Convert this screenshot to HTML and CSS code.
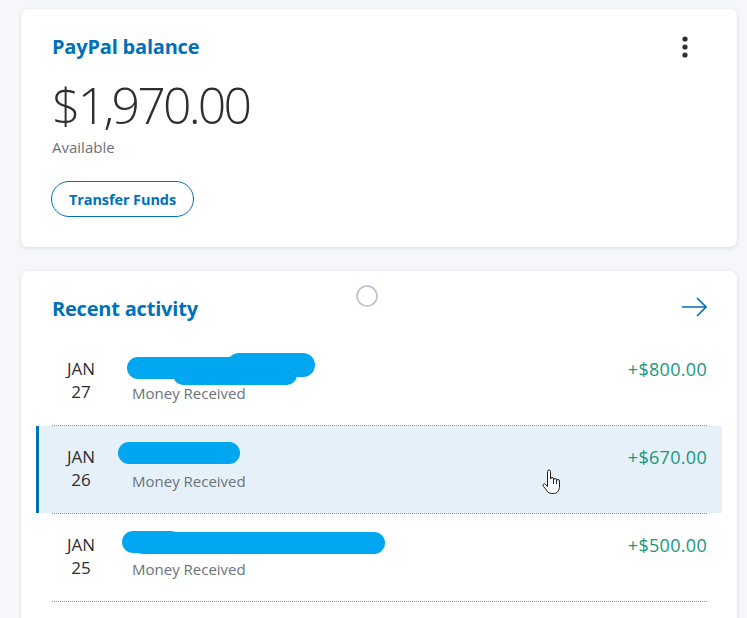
FILE: index.html
```html
<!DOCTYPE html>
<html lang="en">
<head>
  <meta charset="UTF-8" />
  <meta name="viewport" content="width=device-width, initial-scale=1.0" />
  <title>PayPal Summary</title>
  <link rel="stylesheet" href="styles.css">
</head>
<body>
  <section class="card balance-card">
    <div class="card-head">
      <h2 class="card-title">PayPal balance</h2>
      <button class="kebab" aria-label="More options">
        <svg width="6" height="22" viewBox="0 0 6 22">
          <circle cx="3" cy="3" r="2.6" fill="#2c2e2f"/>
          <circle cx="3" cy="11" r="2.6" fill="#2c2e2f"/>
          <circle cx="3" cy="19" r="2.6" fill="#2c2e2f"/>
        </svg>
      </button>
    </div>
    <div class="balance-amount">$1,970.00</div>
    <div class="balance-label">Available</div>
    <button class="btn-outline">Transfer Funds</button>
  </section>

  <section class="card activity-card">
    <svg class="spinner" width="24" height="24" viewBox="0 0 24 24">
      <circle cx="12" cy="12" r="10" fill="none" stroke="#bdb9cc" stroke-width="1.5"/>
    </svg>
    <div class="card-head">
      <h2 class="card-title">Recent activity</h2>
      <a class="arrow-link" href="#" aria-label="See all">
        <svg width="25" height="20" viewBox="0 0 25 20">
          <path d="M0 10 H24 M15 1 L24 10 L15 19" fill="none" stroke="#0070ba" stroke-width="1.6"/>
        </svg>
      </a>
    </div>

    <ul class="tx-list">
      <li class="tx">
        <a class="tx-link" href="#">
          <div class="tx-date"><span>JAN</span><span>27</span></div>
          <div class="tx-info">
            <svg class="redact redact-1" width="188" height="36" viewBox="0 0 188 36">
              <rect x="0" y="4" width="126" height="22" rx="11" fill="#00a7f0"/>
              <rect x="46" y="12" width="124" height="20" rx="10" fill="#00a7f0"/>
              <rect x="100" y="0" width="88" height="24" rx="12" fill="#00a7f0"/>
            </svg>
            <div class="tx-name">&nbsp;</div>
            <div class="tx-type">Money Received</div>
          </div>
          <div class="tx-amount">+$800.00</div>
        </a>
      </li>
      <li class="tx">
        <a class="tx-link is-hover" href="#">
          <div class="tx-date"><span>JAN</span><span>26</span></div>
          <div class="tx-info">
            <svg class="redact redact-2" width="122" height="23" viewBox="0 0 122 23">
              <rect x="0" y="0" width="122" height="22" rx="11" fill="#00a7f0"/>
            </svg>
            <div class="tx-name">&nbsp;</div>
            <div class="tx-type">Money Received</div>
          </div>
          <div class="tx-amount">+$670.00</div>
          <svg class="cursor" width="20" height="26" viewBox="0 0 20 26">
            <path d="M5.5 2.5 a1.5 1.5 0 0 1 3 0 v7.5 a1.5 1.5 0 0 1 3 0 v1 a1.5 1.5 0 0 1 3 0 v1 a1.5 1.5 0 0 1 3 0 v5 c0 4 -2 7.5 -6 7.5 h-2 c-2 0 -3.2 -1 -4.2 -2.2 l-4 -5.2 a1.4 1.4 0 0 1 2.2 -1.8 l2 2.2 z M11.5 11 v4 M14.5 12 v3" fill="#fff" stroke="#1f2328" stroke-width="1" stroke-linejoin="round"/>
          </svg>
        </a>
      </li>
      <li class="tx">
        <a class="tx-link" href="#">
          <div class="tx-date"><span>JAN</span><span>25</span></div>
          <div class="tx-info">
            <svg class="redact redact-3" width="263" height="24" viewBox="0 0 263 24">
              <rect x="0" y="0" width="60" height="22" rx="11" fill="#00a7f0"/>
              <rect x="10" y="1" width="253" height="22" rx="11" fill="#00a7f0"/>
            </svg>
            <div class="tx-name">&nbsp;</div>
            <div class="tx-type">Money Received</div>
          </div>
          <div class="tx-amount">+$500.00</div>
        </a>
      </li>
    </ul>
  </section>
</body>
</html>
```

FILE: styles.css
```css
* {
  box-sizing: border-box;
}
body {
  margin: 0;
  padding: 9px 10px 0 21px;
  background-color: #f5f7fa;
  font-family: "Open Sans", "Noto Sans", Arial, sans-serif;
  color: #2c2e2f;
}
.card {
  position: relative;
  background: white;
  border-radius: 7px;
  box-shadow: 0 1px 4px rgba(0,0,0,0.12);
  padding: 25px 30px 30px 31px;
}
.activity-card {
  margin-top: 24px;
}
.card-head {
  display: flex;
  align-items: center;
  justify-content: space-between;
}
.card-title {
  margin: 0;
  font-size: 20px;
  line-height: 26px;
  font-weight: 700;
  color: #0070ba;
  letter-spacing: -0.2px;
}
.kebab {
  border: none;
  background: none;
  padding: 0;
  margin-right: 19px;
  display: flex;
}
.balance-amount {
  margin-top: 17px;
  font-size: 50px;
  line-height: 56px;
  font-weight: 300;
  letter-spacing: -2.8px;
}
.balance-label {
  margin-top: 4px;
  font-size: 15px;
  line-height: 20px;
  color: #6c7378;
}
.btn-outline {
  margin-top: 24px;
  margin-left: -1px;
  height: 36px;
  padding: 0 17px;
  border: 1px solid #0070ba;
  border-radius: 18px;
  background: white;
  color: #0070ba;
  font-family: inherit;
  font-size: 14.5px;
  font-weight: 700;
  letter-spacing: -0.1px;
  cursor: pointer;
}
.spinner {
  position: absolute;
  left: 334px;
  top: 13px;
}
.arrow-link {
  display: flex;
  margin-top: -5px;
}
.tx-list {
  list-style: none;
  margin: 16px 0 0;
  padding: 0;
}
.tx {
  border-bottom: 1px dotted #8e9396;
}
.tx-link {
  position: relative;
  display: flex;
  align-items: flex-start;
  margin: 0 -15px 0 -16px;
  padding: 19px 15px 22px 13px;
  border-left: 3px solid transparent;
  color: inherit;
  text-decoration: none;
}
.tx-link.is-hover {
  background-color: #e5f0f9;
  border-left-color: #0070ba;
}
.tx-date {
  width: 58px;
  display: flex;
  flex-direction: column;
  align-items: center;
  font-size: 17px;
  line-height: 23px;
}
.tx-info {
  position: relative;
  flex: 1;
  margin-left: 22px;
}
.tx-name {
  height: 23px;
}
.tx-type {
  padding-top: 3px;
  font-size: 15px;
  line-height: 20px;
  color: #6c7378;
}
.tx-amount {
  padding-top: 1px;
  font-size: 18px;
  line-height: 23px;
  letter-spacing: 0.3px;
  color: #19977a;
}
.redact {
  position: absolute;
  display: block;
}
.redact-1 {
  left: -5px;
  top: -4px;
}
.redact-2 {
  left: -14px;
  top: -3px;
}
.redact-3 {
  left: -10px;
  top: -2px;
}
.cursor {
  position: absolute;
  left: 503px;
  top: 43px;
}
```
